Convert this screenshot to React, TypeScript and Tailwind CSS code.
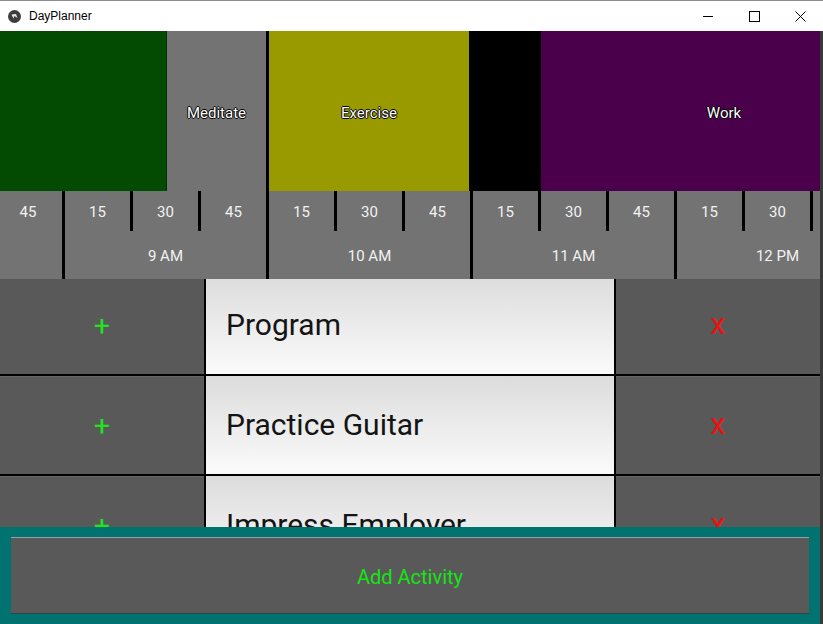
import React from 'react'

const outline = '[text-shadow:-1px_0_0_#000,1px_0_0_#000,0_-1px_0_#000,0_1px_0_#000]'

function Hour({ label }: { label: string }) {
  return (
    <div className="flex shrink-0">
      <div className="w-[3px] bg-black" />
      <div className="flex w-[201px] flex-col">
        <div className="flex h-[40px]">
          {['15', '30', '45'].map((m, i) => (
            <div key={m} className="flex">
              {i > 0 && <div className="w-[3px] bg-black" />}
              <div className="flex w-[65px] items-center justify-center pt-[2px] text-[15px] text-[#f2f2f2]">{m}</div>
            </div>
          ))}
        </div>
        <div className="flex h-[48px] items-center justify-center pt-[2px] text-[15px] text-[#f2f2f2]">{label}</div>
      </div>
    </div>
  )
}

const activities = ['Program', 'Practice Guitar', 'Impress Employer']

function Row({ name }: { name: string }) {
  return (
    <div className="flex h-[98px] shrink-0 gap-[2px]">
      <div className="flex w-[204px] items-center justify-center border-t border-[#666] bg-[#595959] text-[28px] leading-none text-[#1fe51f]">
        +
      </div>
      <div className="flex w-[408px] items-center bg-gradient-to-b from-[#dcdcdc] to-[#fbfbfb] pb-[2px] pl-[20px] text-[30px] text-[#141414]">
        {name}
      </div>
      <div className="flex w-[204px] items-center justify-center border-t border-[#666] bg-[#595959] pb-[4px] text-[30px] leading-none text-[#f01010]">
        x
      </div>
    </div>
  )
}

export default function App() {
  return (
    <div className="flex h-[624px] w-[823px] flex-col overflow-hidden bg-[#2e2e2e] font-['Roboto',sans-serif]">
      {/* Title bar */}
      <div className="flex h-[31px] shrink-0 items-center border-t border-[#8c8c8c] bg-white font-['Liberation_Sans',sans-serif] text-[12px] text-black">
        <svg className="ml-[8px]" width="13" height="13" viewBox="0 0 13 13">
          <circle cx="6.5" cy="6.5" r="6.5" fill="#3d3d3d" />
          <path d="M3.5 4.5 L5.5 8.5 L6.5 6 L9.5 8 L8 4 Z" fill="#e8e8e8" />
        </svg>
        <span className="ml-[8px]">DayPlanner</span>
        <div className="ml-auto flex h-full">
          <div className="flex w-[46px] items-center justify-center">
            <svg width="11" height="11" viewBox="0 0 11 11">
              <path d="M0 5.5 H10" stroke="#000" strokeWidth="1" />
            </svg>
          </div>
          <div className="flex w-[46px] items-center justify-center">
            <svg width="11" height="11" viewBox="0 0 11 11">
              <rect x="0.5" y="0.5" width="10" height="10" fill="none" stroke="#000" strokeWidth="1" />
            </svg>
          </div>
          <div className="flex w-[46px] items-center justify-center">
            <svg width="11" height="11" viewBox="0 0 11 11">
              <path d="M0.5 0.5 L10.5 10.5 M10.5 0.5 L0.5 10.5" stroke="#000" strokeWidth="1" />
            </svg>
          </div>
        </div>
      </div>

      <div className="flex min-h-0 flex-1 flex-col border-r-[3px] border-[#3a3a3a]">
        {/* Timeline */}
        <div className="flex h-[248px] shrink-0 flex-col overflow-hidden bg-[#737373]">
          <div className={`flex h-[160px] shrink-0 pt-[4px] text-[15px] text-white ${outline}`}>
            <div className="-mt-[4px] w-[167px] shrink-0 border-r border-[#032f03] bg-[#034a03]" />
            <div className="flex w-[99px] shrink-0 items-center justify-center">Meditate</div>
            <div className="-mt-[4px] w-[3px] shrink-0 bg-black" />
            <div className="-mt-[4px] flex w-[200px] shrink-0 items-center justify-center bg-[#999900] pt-[4px]">Exercise</div>
            <div className="-mt-[4px] w-[72px] shrink-0 bg-black" />
            <div className="-mt-[4px] flex flex-1 overflow-hidden bg-[#4b004b] pt-[4px]">
              <div className="flex w-[366px] shrink-0 items-center justify-center">Work</div>
            </div>
          </div>
          <div className="flex h-[88px] shrink-0">
            <div className="flex w-[62px] shrink-0 flex-col">
              <div className="flex h-[40px] items-center justify-center pr-[6px] pt-[2px] text-[15px] text-[#f2f2f2]">45</div>
            </div>
            <Hour label="9 AM" />
            <Hour label="10 AM" />
            <Hour label="11 AM" />
            <Hour label="12 PM" />
          </div>
        </div>

        {/* Activity list */}
        <div className="min-h-0 flex-1 overflow-hidden bg-black">
          <div className="-mt-[3px] flex flex-col gap-[2px]">
            {activities.map((a) => (
              <Row key={a} name={a} />
            ))}
          </div>
        </div>

        {/* Footer */}
        <div className="h-[97px] shrink-0 bg-[#007370] px-[11px] py-[10px]">
          <button className="flex h-full w-full items-center justify-center border-t border-b border-t-[#8fa3a3] border-b-[#2f4646] bg-[#595959] pt-[2px] text-[20px] text-[#14e614]">
            Add Activity
          </button>
        </div>
      </div>
    </div>
  )
}
